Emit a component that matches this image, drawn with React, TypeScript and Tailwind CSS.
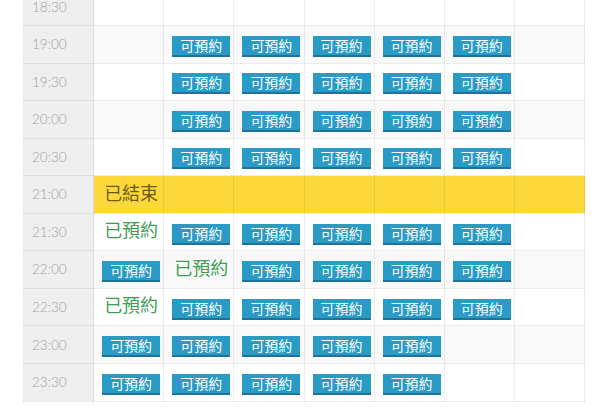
import React from "react";

type Cell = "" | "btn" | "booked" | "ended";

const B: Cell = "btn";
const E: Cell = "";
const K: Cell = "booked";

const rows: { time: string; cells: Cell[]; bg: string }[] = [
  { time: "18:30", cells: [E, E, E, E, E, E, E], bg: "white" },
  { time: "19:00", cells: [E, B, B, B, B, B, E], bg: "gray" },
  { time: "19:30", cells: [E, B, B, B, B, B, E], bg: "white" },
  { time: "20:00", cells: [E, B, B, B, B, B, E], bg: "gray" },
  { time: "20:30", cells: [E, B, B, B, B, B, E], bg: "white" },
  { time: "21:00", cells: ["ended", E, E, E, E, E, E], bg: "yellow" },
  { time: "21:30", cells: [K, B, B, B, B, B, E], bg: "white" },
  { time: "22:00", cells: [B, K, B, B, B, B, E], bg: "gray" },
  { time: "22:30", cells: [K, B, B, B, B, B, E], bg: "white" },
  { time: "23:00", cells: [B, B, B, B, B, E, E], bg: "gray" },
  { time: "23:30", cells: [B, B, B, B, B, E, E], bg: "white" },
];

function Btn() {
  return (
    <span className="mt-[5px] inline-flex h-[21px] w-[58px] items-center justify-center border-b-2 border-[#1f7299] bg-[#2a9ac6] pt-[1px] text-[14px] leading-none text-white">
      可預約
    </span>
  );
}

export default function App() {
  return (
    <div
      className="h-[415px] w-[600px] overflow-hidden bg-white"
      style={{ fontFamily: '"Liberation Sans", "Noto Sans CJK TC", sans-serif' }}
    >
      <table className="ml-[23px] mt-[-12.5px] w-[562px] table-fixed border-collapse">
        <tbody>
          {rows.map((r) => {
            const rowBg =
              r.bg === "yellow" ? "bg-[#fdd83a]" : r.bg === "gray" ? "bg-[#f9f9f9]" : "bg-white";
            return (
              <tr key={r.time} className="h-[37.55px]">
                <td className="border border-black/[0.07] bg-[#efefef] pl-[8px] align-middle font-['Lato',sans-serif] text-[13.5px] font-light text-[#9f9f9f]">
                  {r.time}
                </td>
                {r.cells.map((c, i) => (
                  <td
                    key={i}
                    className={`border border-black/[0.07] ${rowBg} pl-[8px] align-middle`}
                  >
                    {c === "btn" && <Btn />}
                    {c === "booked" && (
                      <span className="pl-[2px] text-[18px] leading-none text-[#3e9e52]">已預約</span>
                    )}
                    {c === "ended" && (
                      <span className="pl-[2px] text-[18px] leading-none text-[#6b5a20]">已結束</span>
                    )}
                  </td>
                ))}
              </tr>
            );
          })}
        </tbody>
      </table>
    </div>
  );
}
